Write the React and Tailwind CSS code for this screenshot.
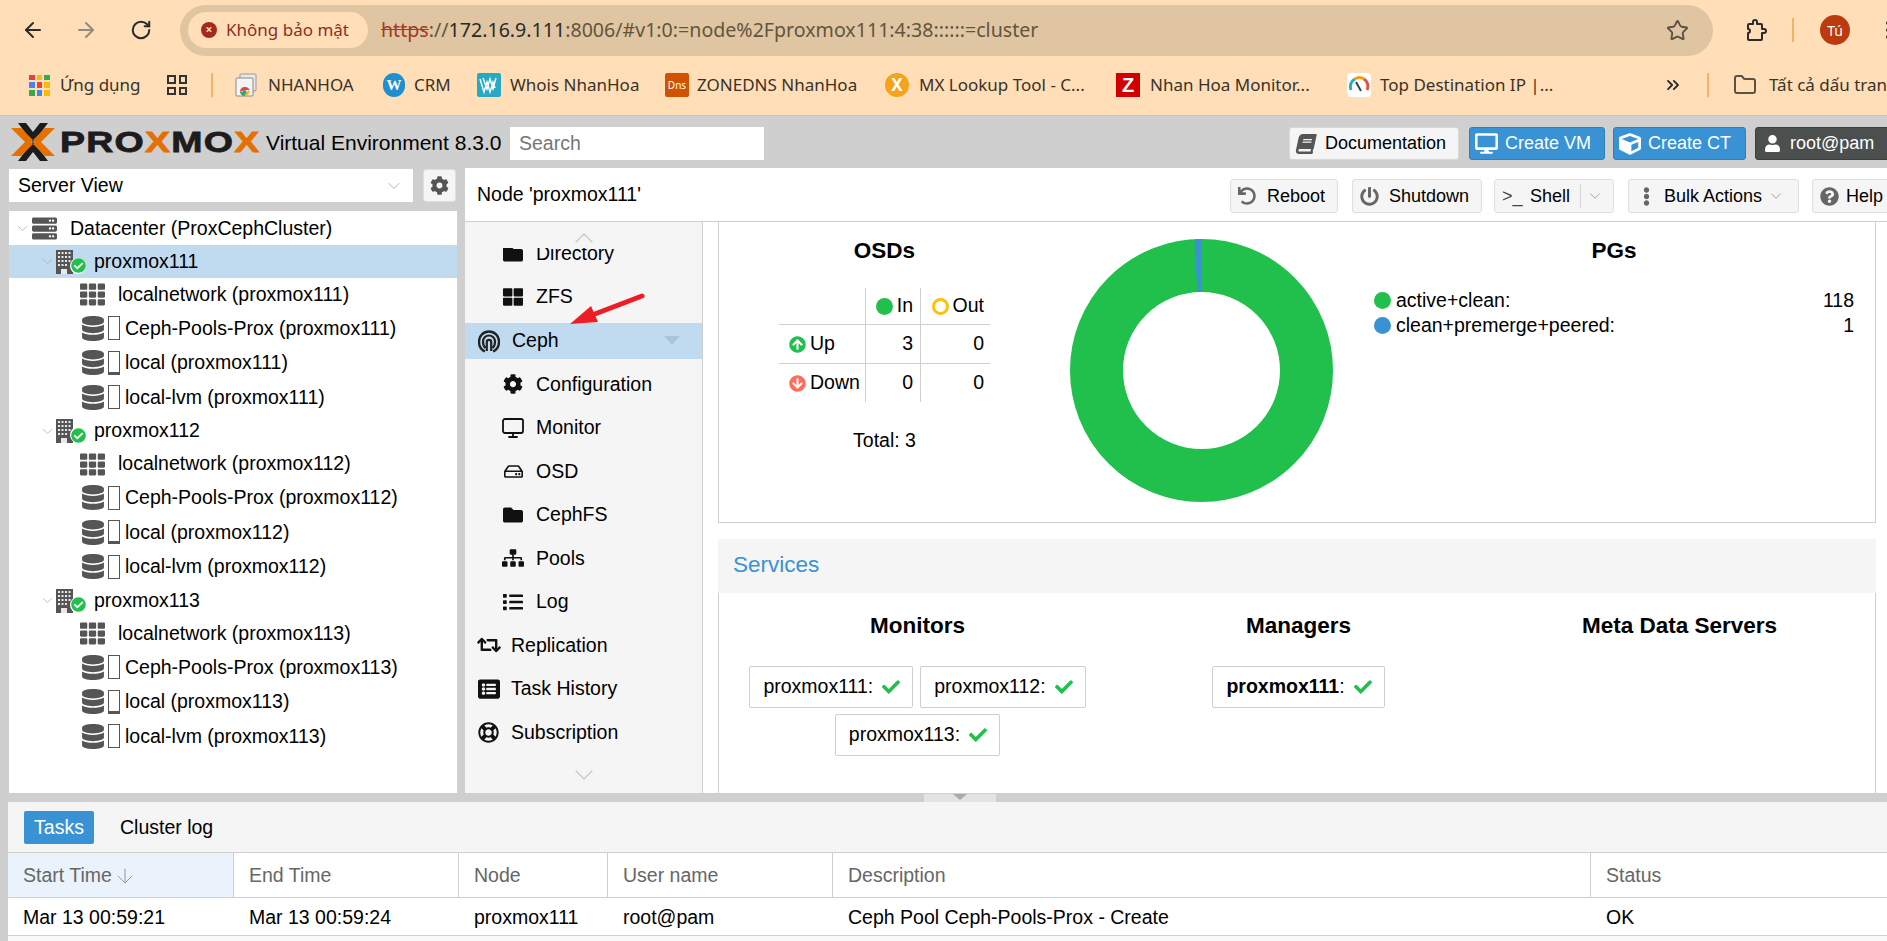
import { ArrowDown, ArrowLeft, ArrowRight, ChevronDown, ChevronUp, ChevronsRight, Folder, Monitor, RotateCw, Star } from 'lucide-react';
import {
    FaBook, FaCheck, FaCog, FaCube, FaDatabase, FaDesktop, FaEllipsisV, FaFolder, FaRegHdd,
    FaRegLifeRing, FaList, FaListAlt, FaPowerOff, FaQuestionCircle, FaRetweet, FaServer, FaSitemap, FaTh,
    FaThLarge, FaUndo, FaUser, FaArrowCircleUp, FaArrowCircleDown, FaCheckCircle,
} from 'react-icons/fa';

const AppsIcon = () => {
    const colors = ['#ea4335', '#fbbc05', '#34a853', '#4285f4', '#ea4335', '#fbbc05', '#34a853', '#4285f4', '#fbbc05'];
    return (
        <div className="grid grid-cols-3 gap-[2px] w-[21px] h-[21px]">
            {colors.map((c, i) => <div key={i} style={{ background: c }}></div>)}
        </div>
    );
};

const GroupIcon = () => (
    <div className="grid grid-cols-2 gap-[3px] w-[20px] h-[20px]">
        <div className="border-2 border-[#333]"></div>
        <div className="border-2 border-[#333]"></div>
        <div className="border-2 border-[#333]"></div>
        <div className="border-2 border-[#333]"></div>
    </div>
);

const NhanHoaIcon = () => (
    <svg width="22" height="24" viewBox="0 0 22 24">
        <rect x="5" y="1" width="16" height="17" rx="1" fill="#e8e8e8" stroke="#999" />
        <rect x="1" y="5" width="17" height="18" rx="1" fill="#f5f5f5" stroke="#888" />
        <path d="M5 19a5 5 0 0 1 9.6-2H9.5z" fill="#ea4335" />
        <path d="M14.600 17A5 5 0 0 1 9.500 23l2-4z" fill="#fbbc05" />
        <path d="M5 19a5 5 0 0 0 4.500 4l2-4z" fill="#34a853" />
        <circle cx="9.500" cy="19" r="2" fill="#4285f4" />
    </svg>
);

const WhoisIcon = () => (
    <svg width="24" height="24" viewBox="0 0 24 24">
        <rect width="24" height="24" rx="2" fill="#27a9c6" />
        <path d="M3 6l4 13 3-10 3 10 3-10 2 6M6 5l4 11 3-10 3 10 3-11" fill="none" stroke="#fff" strokeWidth="1.400" />
    </svg>
);

const GaugeIcon = () => (
    <svg width="24" height="24" viewBox="0 0 24 24">
        <rect width="24" height="24" rx="4" fill="#fff" />
        <path d="M4 17a8.500 8.500 0 0 1 4-11" fill="none" stroke="#27a9c6" strokeWidth="3" />
        <path d="M8 6a8.500 8.500 0 0 1 9 0" fill="none" stroke="#f59e0b" strokeWidth="3" />
        <path d="M17 6a8.500 8.500 0 0 1 3 11" fill="none" stroke="#e0533d" strokeWidth="3" />
        <path d="M9 9l5 9" stroke="#334155" strokeWidth="2" />
    </svg>
);

const PuzzleIcon = () => (
    <svg width="24" height="26" viewBox="0 0 24 26" fill="none" stroke="#2b2b2b" strokeWidth="2" strokeLinejoin="round" className="ml-[30px] shrink-0">
        <path d="M6 7h4V5a2 2 0 0 1 4 0v2h4a1 1 0 0 1 1 1v4h2a2 2 0 0 1 0 4h-2v6a1 1 0 0 1-1 1H6a1 1 0 0 1-1-1v-6a2 2 0 0 0 0-4V8a1 1 0 0 1 1-1z" />
    </svg>
);

const Bookmark = ({ className, icon, label }) => (
    <div className={`flex items-center shrink-0 ${className}`}>
        {icon}
        <span className="truncate">{label}</span>
    </div>
);

const BrowserChrome = () => (
    <div className="h-[116px] shrink-0 bg-[#ffdeb8] border-b border-[#c9c5c0] font-['Noto_Sans',sans-serif] text-[#3a3226] overflow-hidden">
        <div className="h-[60px] flex items-center">
            <div className="w-[180px] flex items-center shrink-0">
                <ArrowLeft size={24} strokeWidth={2} className="ml-[21px] text-[#2b2b2b]" />
                <ArrowRight size={24} strokeWidth={2} className="ml-[29px] text-[#958a7c]" />
                <RotateCw size={22} strokeWidth={2.2} className="ml-[32px] text-[#2b2b2b]" />
            </div>
            <div className="w-[1533px] h-[51px] shrink-0 rounded-full bg-[#dfc5a1] flex items-center pl-[8px] pr-[24px]">
                <div className="w-[180px] h-[36px] rounded-full bg-[#ffdeb8] flex items-center pl-[13px] text-[#8f2d22] text-[17px] shrink-0">
                    <span className="w-[16px] h-[16px] rounded-full bg-[#a3281e] text-[#ffdeb8] flex items-center justify-center text-[12px] font-bold leading-none mr-[9px]">×</span>
                    Không bảo mật
                </div>
                <div className="ml-[13px] flex-1 text-[19.6px] whitespace-nowrap text-[#61553f]">
                    <span className="line-through text-[#a33a2c]">https</span>://<span className="text-[#2b2b2b]">172.16.9.111</span>:8006/#v1:0:=node%2Fproxmox111:4:38::::::=cluster
                </div>
                <Star size={23} strokeWidth={2} className="text-[#5b5245]" />
            </div>
            <PuzzleIcon />
            <div className="ml-[25px] w-[2px] h-[24px] bg-[#f2b366] shrink-0"></div>
            <div className="ml-[26px] w-[30px] h-[30px] rounded-full bg-[#bb3a0f] text-white text-[14px] flex items-center justify-center shrink-0">Tú</div>
            <div className="ml-[36px] w-[4px] flex flex-col gap-[3px] shrink-0">
                <div className="h-[4px] bg-[#333] rounded-full"></div>
                <div className="h-[4px] bg-[#333] rounded-full"></div>
                <div className="h-[4px] bg-[#333] rounded-full"></div>
            </div>
        </div>
        <div className="h-[50px] flex items-center text-[17px] whitespace-nowrap pl-[29px]">
            <Bookmark className="w-[138px]" icon={<div className="mr-[10px]"><AppsIcon /></div>} label="Ứng dụng" />
            <div className="w-[44px] shrink-0"><GroupIcon /></div>
            <div className="w-[2px] h-[24px] bg-[#f2b366] shrink-0 mr-[22px]"></div>
            <Bookmark className="w-[148px]" icon={<div className="mr-[11px]"><NhanHoaIcon /></div>} label="NHANHOA" />
            <Bookmark className="w-[94px]" icon={<div className="mr-[9px] w-[22px] h-[24px] rounded-full bg-[#1f8fd0] text-white font-['Liberation_Serif',serif] font-bold text-[15px] flex items-center justify-center">W</div>} label="CRM" />
            <Bookmark className="w-[188px]" icon={<div className="mr-[9px]"><WhoisIcon /></div>} label="Whois NhanHoa" />
            <Bookmark className="w-[220px]" icon={<div className="mr-[8px] w-[24px] h-[24px] rounded-[2px] bg-[#cf5300] text-white text-[10px] flex items-center justify-center">Dns</div>} label="ZONEDNS NhanHoa" />
            <Bookmark className="w-[231px] pr-[12px]" icon={<div className="mr-[10px] shrink-0 w-[24px] h-[24px] rounded-full bg-[#f7a21b] text-white font-bold text-[17px] flex items-center justify-center">X</div>} label="MX Lookup Tool - C..." />
            <Bookmark className="w-[231px] pr-[12px]" icon={<div className="mr-[10px] shrink-0 w-[24px] h-[24px] bg-[#d00000] text-white font-bold text-[20px] font-['Liberation_Sans',sans-serif] flex items-center justify-center">Z</div>} label="Nhan Hoa Monitor..." />
            <Bookmark className="w-[309px]" icon={<div className="mr-[9px]"><GaugeIcon /></div>} label="Top Destination IP |..." />
            <ChevronsRight size={20} strokeWidth={2.2} className="w-[34px] mr-[17px] shrink-0 text-[#2b2b2b]" />
            <div className="w-[2px] h-[24px] bg-[#f2b366] shrink-0 mr-[24px]"></div>
            <Bookmark className="w-[200px]" icon={<Folder size={24} strokeWidth={2} className="mr-[12px] shrink-0 text-[#5b5245]" />} label="Tất cả dấu trang" />
        </div>
    </div>
);

const HeaderButton = ({ className, icon, label }) => (
    <div className={`h-[33px] rounded-[3px] flex items-center shrink-0 text-[18px] ${className}`}>
        {icon}
        <span>{label}</span>
    </div>
);

const PveHeader = () => (
    <div className="h-[52px] bg-[#cfcfcf] flex items-center pl-[11px] shrink-0 whitespace-nowrap">
        <svg width="44" height="38" viewBox="0 0 44 38" className="shrink-0">
            <path d="M7 0h8l7 9 7-9h8L22 20zM7 38h8l7-9 7 9h8L22 18z" fill="#1c1c1c" />
            <path d="M0 5h10l14 14L10 33H0l14-14zM44 5H34L20 19l14 14h10L30 19z" fill="#e57000" />
        </svg>
        <div className="w-[207px] pl-[5px] shrink-0">
            <div className="w-max origin-left scale-x-[1.25] text-[30px] leading-[38px] font-bold text-[#1c1c1c] tracking-[1px] [-webkit-text-stroke:0.8px_currentColor]">
                PRO<span className="text-[#e57000]">X</span>MO<span className="text-[#e57000]">X</span>
            </div>
        </div>
        <div className="text-[21px] leading-none w-[248px] shrink-0 pl-[4px]">Virtual Environment 8.3.0</div>
        <div className="w-[254px] h-[33px] mt-[3px] bg-white text-[#767676] text-[19.5px] pl-[9px] flex items-center shrink-0">Search</div>
        <div className="flex-1"></div>
        <div className="flex mt-[3px] w-[598px] shrink-0 overflow-hidden">
            <HeaderButton className="w-[170px] bg-[#f5f5f5] border border-[#d8d8d8] pl-[6px]" icon={<FaBook size={20} className="text-[#555] mr-[9px] -skew-x-12" />} label="Documentation" />
            <HeaderButton className="w-[136px] ml-[10px] bg-[#3892d4] border border-[#2f7fb8] text-white pl-[5px]" icon={<FaDesktop size={23} className="mr-[7px]" />} label="Create VM" />
            <HeaderButton className="w-[133px] ml-[8px] bg-[#3892d4] border border-[#2f7fb8] text-white pl-[5px]" icon={<FaCube size={22} className="mr-[7px]" />} label="Create CT" />
            <HeaderButton className="w-[140px] ml-[9px] bg-[#4b4f4d] border border-[#3d3f3e] text-white pl-[8px]" icon={<FaUser size={17} className="mr-[9px]" />} label="root@pam" />
        </div>
    </div>
);

const TreeChevron = () => <ChevronDown size={17} strokeWidth={1.2} className="text-[#b5b5b5] shrink-0" />;

const BuildingIcon = () => (
    <svg width="17" height="24" viewBox="0 0 17 24">
        <rect width="17" height="24" fill="#555" />
        <path d="M2 2h2v2H2zM5.500 2h2v2h-2zM9 2h2v2H9zM12.500 2h2v2h-2zM2 6h2v2H2zM5.500 6h2v2h-2zM9 6h2v2H9zM12.500 6h2v2h-2zM2 10h2v2H2zM5.500 10h2v2h-2zM9 10h2v2H9zM12.500 10h2v2h-2zM2 14h2v2H2zM5.500 14h2v2h-2zM9 14h2v2H9zM5 19h6v5H5z" fill="#e8e8e8" />
    </svg>
);

const Storage = ({ label, used }) => (
    <div className="h-[34.5px] flex items-center pl-[73px] whitespace-nowrap">
        <FaDatabase size={25} className="text-[#555] w-[22px] shrink-0" />
        <div className="ml-[4px] mr-[5px] w-[12px] h-[24px] border border-[#555] flex flex-col justify-end shrink-0">
            {used && <div className="h-[2px] bg-[#555]"></div>}
        </div>
        {label}
    </div>
);

const TreeNode = ({ id, selected }) => (
    <div>
        <div className={selected ? 'h-[33px] flex items-center pl-[30px] bg-[#c0daf0]' : 'h-[33px] flex items-center pl-[30px]'}>
            <TreeChevron />
            <div className="relative w-[30px] h-[24px] mr-[8px] shrink-0">
                <BuildingIcon />
                <div className="absolute left-[14px] top-[8px] w-[16px] h-[16px] rounded-full bg-white flex items-center justify-center">
                    <FaCheckCircle size={15} className="text-[#21bf4b]" />
                </div>
            </div>
            {id}
        </div>
        <div className="h-[33px] flex items-center pl-[71px]">
            <FaTh size={25} className="text-[#555] mr-[13px] shrink-0" />
            localnetwork ({id})
        </div>
        <Storage label={`Ceph-Pools-Prox (${id})`} />
        <Storage label={`local (${id})`} used />
        <Storage label={`local-lvm (${id})`} />
    </div>
);

const LeftColumn = () => (
    <div className="w-[465px] shrink-0 pl-[9px] pr-[8px] flex flex-col">
        <div className="flex h-[33px] mt-[1px] shrink-0">
            <div className="w-[404px] bg-white flex items-center pl-[9px] pr-[9px]">
                <span className="flex-1">Server View</span>
                <ChevronDown size={20} strokeWidth={1.2} className="text-[#b5b5b5]" />
            </div>
            <div className="w-[33px] ml-[10px] bg-[#f5f5f5] border border-[#dedede] rounded-[3px] flex items-center justify-center">
                <FaCog size={19} className="text-[#555]" />
            </div>
        </div>
        <div className="mt-[9px] pt-[1px] flex-1 bg-white overflow-hidden">
            <div className="h-[33px] flex items-center pl-[5px]">
                <TreeChevron />
                <FaServer size={25} className="text-[#555] ml-[1px] mr-[13px] shrink-0" />
                Datacenter (ProxCephCluster)
            </div>
            <TreeNode id="proxmox111" selected />
            <TreeNode id="proxmox112" />
            <TreeNode id="proxmox113" />
        </div>
    </div>
);

const ToolButton = ({ className, icon, label, arrow, split }) => (
    <div className={`h-[34px] mt-[3px] bg-[#f5f5f5] border border-[#dedede] rounded-[3px] flex items-center shrink-0 text-[18px] whitespace-nowrap ${className}`}>
        {icon}
        <span>{label}</span>
        {split && <div className="ml-[10px] w-px h-[24px] bg-[#d5d5d5]"></div>}
        {arrow && <ChevronDown size={18} strokeWidth={1.2} className="text-[#999] ml-[5px]" />}
    </div>
);

const TitleBar = () => (
    <div className="h-[54px] bg-white border-b border-[#cfcfcf] flex items-center pl-[12px] shrink-0 overflow-hidden">
        <div className="w-[753px] mt-[1px] shrink-0 text-[19.5px]">Node 'proxmox111'</div>
        <ToolButton className="w-[108px] pl-[7px]" icon={<FaUndo size={18} className="text-[#666] mr-[11px]" />} label="Reboot" />
        <ToolButton className="w-[130px] ml-[14px] pl-[7px]" icon={<FaPowerOff size={19} className="text-[#666] mr-[10px]" />} label="Shutdown" />
        <ToolButton className="w-[120px] ml-[12px] pl-[7px]" icon={<span className="w-[28px] text-[#444]">{'>_'}</span>} label="Shell" split arrow />
        <ToolButton className="w-[171px] ml-[14px] pl-[8px]" icon={<FaEllipsisV size={19} className="text-[#666] mr-[8px]" />} label="Bulk Actions" arrow />
        <ToolButton className="w-[100px] ml-[13px] pl-[7px]" icon={<FaQuestionCircle size={19} className="text-[#666] mr-[7px]" />} label="Help" />
    </div>
);

const CephIcon = () => (
    <svg width="22" height="24" viewBox="0 0 22 24" className="mr-[12px] shrink-0 ml-[1px]">
        <path d="M7 22.500C2.500 20.500 1 16.500 1 12.500A10 10 0 0 1 21 12.500C21 16.500 19.500 20.500 15 22.500" fill="none" stroke="#222" strokeWidth="2.400" />
        <path d="M7.500 19C5.500 17.500 5 15 5 12.500A6 6 0 0 1 17 12.500C17 15 16.500 17.500 14.500 19" fill="none" stroke="#222" strokeWidth="2.200" />
        <path d="M8.800 22V13A2.200 2.200 0 0 1 13.200 13V22" fill="none" stroke="#222" strokeWidth="2.200" />
    </svg>
);

const NavChild = ({ icon, label }) => (
    <div className="h-[36px] mb-[7.55px] flex items-center pl-[36px] shrink-0">
        <div className="w-[24px] mr-[11px] flex items-center justify-center shrink-0 text-[#111]">{icon}</div>
        {label}
    </div>
);

const NavTop = ({ icon, label, active }) => (
    <div className={active ? 'h-[36px] mb-[7.55px] flex items-center pl-[12px] shrink-0 bg-[#c0daf0]' : 'h-[36px] mb-[7.55px] flex items-center pl-[12px] shrink-0'}>
        {icon}
        <span className="flex-1">{label}</span>
        {active && <div className="mr-[22px] w-0 h-0 border-l-[8px] border-r-[8px] border-t-[9px] border-l-transparent border-r-transparent border-t-[#a9c4dc]"></div>}
    </div>
);

const Nav = () => (
    <div className="relative w-[238px] shrink-0 bg-[#f5f5f5] border-r border-[#cfcfcf] flex flex-col">
        <div className="h-[26px] shrink-0 flex justify-center items-end relative z-10 bg-[#f5f5f5]">
            <ChevronUp size={32} strokeWidth={1} className="text-[#c9c9c9] -mb-[6px]" />
        </div>
        <div className="flex-1 overflow-hidden">
            <div className="-mt-[12.500px]">
                <NavChild icon={<FaFolder size={20} />} label="Directory" />
                <NavChild icon={<FaThLarge size={20} />} label="ZFS" />
                <NavTop icon={<CephIcon />} label="Ceph" active />
                <NavChild icon={<FaCog size={20} />} label="Configuration" />
                <NavChild icon={<Monitor size={24} strokeWidth={1.8} />} label="Monitor" />
                <NavChild icon={<FaRegHdd size={19} />} label="OSD" />
                <NavChild icon={<FaFolder size={20} />} label="CephFS" />
                <NavChild icon={<FaSitemap size={22} />} label="Pools" />
                <NavChild icon={<FaList size={20} />} label="Log" />
                <NavTop icon={<FaRetweet size={24} className="mr-[10px] shrink-0 text-[#111]" />} label="Replication" />
                <NavTop icon={<FaListAlt size={22} className="mr-[11px] ml-[1px] shrink-0 text-[#111]" />} label="Task History" />
                <NavTop icon={<FaRegLifeRing size={21} className="mr-[12px] ml-[1px] shrink-0 text-[#111]" />} label="Subscription" />
            </div>
        </div>
        <div className="h-[40px] shrink-0 flex justify-center items-center">
            <ChevronDown size={32} strokeWidth={1} className="text-[#c9c9c9] mt-[4px]" />
        </div>
        <svg width="80" height="34" viewBox="0 0 80 34" className="absolute left-[102px] top-[71px]">
            <path d="M75 3L20 24" stroke="#ee1c25" strokeWidth="5" strokeLinecap="round" />
            <path d="M3 31L24 13l7 16z" fill="#ee1c25" />
        </svg>
    </div>
);

const OsdTable = () => (
    <div className="w-[211px] mx-auto mt-[25px] grid grid-cols-[87px_55px_69px] text-[19.5px]">
        <div className="h-[37px] border-r border-b border-[#cfcfcf]"></div>
        <div className="h-[37px] border-r border-b border-[#cfcfcf] flex items-center justify-end pr-[7px]">
            <span className="w-[17px] h-[17px] rounded-full bg-[#21bf4b] mr-[4px]"></span>In
        </div>
        <div className="h-[37px] border-b border-[#cfcfcf] flex items-center justify-end pr-[6px]">
            <span className="w-[17px] h-[17px] rounded-full border-[3px] border-[#ffc107] mr-[4px]"></span>Out
        </div>
        <div className="h-[39px] border-r border-b border-[#cfcfcf] flex items-center pl-[10px]">
            <FaArrowCircleUp size={17} className="text-[#21bf4b] mr-[4px]" />Up
        </div>
        <div className="h-[39px] border-r border-b border-[#cfcfcf] flex items-center justify-end pr-[7px]">3</div>
        <div className="h-[39px] border-b border-[#cfcfcf] flex items-center justify-end pr-[6px]">0</div>
        <div className="h-[38px] border-r border-[#cfcfcf] flex items-center pl-[10px]">
            <FaArrowCircleDown size={17} className="text-[#ff6c59] mr-[4px]" />Down
        </div>
        <div className="h-[38px] border-r border-[#cfcfcf] flex items-center justify-end pr-[7px]">0</div>
        <div className="h-[38px] flex items-center justify-end pr-[6px]">0</div>
    </div>
);

const Donut = () => (
    <svg width="263" height="263" viewBox="0 0 263 263">
        <circle cx="131.500" cy="131.500" r="105" fill="none" stroke="#21bf4b" strokeWidth="53" />
        <path d="M131.500 0A131.500 131.500 0 0 0 124.560 .18L127.360 53.110A78.500 78.500 0 0 1 131.500 53z" fill="#3892d4" />
    </svg>
);

const PgRow = ({ color, label, value }) => (
    <div className="h-[25px] flex items-center text-[19.5px]">
        <span className="w-[17px] h-[17px] rounded-full mr-[5px]" style={{ background: color }}></span>
        <span className="flex-1">{label}</span>
        <span>{value}</span>
    </div>
);

const StatusCard = () => (
    <div className="h-[301px] shrink-0 border border-t-0 border-[#cfcfcf] flex overflow-hidden">
        <div className="w-[331px] shrink-0">
            <div className="mt-[17px] text-center text-[22.5px] leading-[24px] font-bold">OSDs</div>
            <OsdTable />
            <div className="mt-[26px] text-center text-[19.5px] leading-[24px]">Total: 3</div>
        </div>
        <div className="w-[303px] shrink-0 pt-[17px] flex justify-center">
            <Donut />
        </div>
        <div className="flex-1 pl-[21px] pr-[21px]">
            <div className="mt-[17px] text-center text-[22.5px] leading-[24px] font-bold">PGs</div>
            <div className="mt-[25px]">
                <PgRow color="#21bf4b" label="active+clean:" value="118" />
                <PgRow color="#3892d4" label="clean+premerge+peered:" value="1" />
            </div>
        </div>
    </div>
);

const ServiceBadge = ({ name, bold }) => (
    <div className="h-[42px] pl-[13px] pr-[12px] bg-white border border-[#cfcfcf] rounded-[2px] flex items-center text-[19.5px]">
        {bold ? <b>{name}</b> : name}:
        <FaCheck size={18} className="text-[#21bf4b] ml-[9px]" />
    </div>
);

const ServiceColumn = ({ title, children }) => (
    <div className="w-[381px] shrink-0">
        <div className="mt-[21px] text-center text-[22.5px] leading-[24px] font-bold">{title}</div>
        <div className="mt-[28px] px-[15px] flex flex-wrap justify-center gap-x-[7px] gap-y-[6px]">{children}</div>
    </div>
);

const Services = () => (
    <div className="mt-[16px] flex-1 flex flex-col min-h-0">
        <div className="h-[54px] pb-[2px] bg-[#f5f5f5] flex items-center pl-[15px] text-[22.5px] text-[#3892d4] shrink-0">Services</div>
        <div className="flex-1 border-x border-[#cfcfcf] flex pl-[8px] overflow-hidden">
            <ServiceColumn title="Monitors">
                <ServiceBadge name="proxmox111" />
                <ServiceBadge name="proxmox112" />
                <ServiceBadge name="proxmox113" />
            </ServiceColumn>
            <ServiceColumn title="Managers">
                <ServiceBadge name="proxmox111" bold />
            </ServiceColumn>
            <ServiceColumn title="Meta Data Servers" />
        </div>
    </div>
);

const TaskHead = ({ className, children }) => (
    <div className={`h-full flex items-center pl-[15px] pt-[2px] border-r border-[#cfcfcf] text-[#666] ${className}`}>{children}</div>
);

const TaskCell = ({ children }) => <div className="h-full flex items-center pl-[15px] pt-[2px] whitespace-nowrap">{children}</div>;

const BottomPanel = () => (
    <div className="flex-1 ml-[8px] bg-[#f9f9f9] flex flex-col text-[19.5px]">
        <div className="h-[51px] bg-[#f5f5f5] border-b border-[#cfcfcf] flex items-center pl-[16px] shrink-0">
            <div className="w-[70px] h-[33px] mt-[1px] rounded-[2px] bg-[#3892d4] text-white flex items-center justify-center">Tasks</div>
            <div className="ml-[26px] mt-[1px]">Cluster log</div>
        </div>
        <div className="h-[45px] bg-white border-b border-[#cfcfcf] grid grid-cols-[226px_225px_149px_225px_758px_1fr] shrink-0">
            <TaskHead className="bg-[#eaf3fb]">Start Time<ArrowDown size={24} strokeWidth={1} className="text-[#999] ml-[1px]" /></TaskHead>
            <TaskHead>End Time</TaskHead>
            <TaskHead>Node</TaskHead>
            <TaskHead>User name</TaskHead>
            <TaskHead>Description</TaskHead>
            <TaskHead className="border-r-0">Status</TaskHead>
        </div>
        <div className="h-[38px] bg-white border-b border-[#cfcfcf] grid grid-cols-[226px_225px_149px_225px_758px_1fr] shrink-0">
            <TaskCell>Mar 13 00:59:21</TaskCell>
            <TaskCell>Mar 13 00:59:24</TaskCell>
            <TaskCell>proxmox111</TaskCell>
            <TaskCell>root@pam</TaskCell>
            <TaskCell>Ceph Pool Ceph-Pools-Prox - Create</TaskCell>
            <TaskCell>OK</TaskCell>
        </div>
    </div>
);

const App = () => {
    return (
        <div className="w-[1887px] h-[941px] bg-[#cfcfcf] text-black flex flex-col overflow-hidden font-['Liberation_Sans',Arial,sans-serif] text-[19.5px]">
            <BrowserChrome />
            <PveHeader />
            <div className="h-[625px] flex shrink-0">
                <LeftColumn />
                <div className="flex-1 flex flex-col min-w-0">
                    <TitleBar />
                    <div className="flex-1 flex min-h-0">
                        <Nav />
                        <div className="flex-1 bg-white pl-[15px] pr-[11px] flex flex-col min-w-0">
                            <StatusCard />
                            <Services />
                        </div>
                    </div>
                </div>
            </div>
            <div className="h-[9px] shrink-0 pl-[924px] pt-[1px]">
                <div className="w-[72px] h-[8px] bg-[#e3e3e3] flex justify-center">
                    <div className="w-0 h-0 border-l-[7px] border-r-[7px] border-t-[6px] border-l-transparent border-r-transparent border-t-[#aaa]"></div>
                </div>
            </div>
            <BottomPanel />
        </div>
    );
};

export default App;
